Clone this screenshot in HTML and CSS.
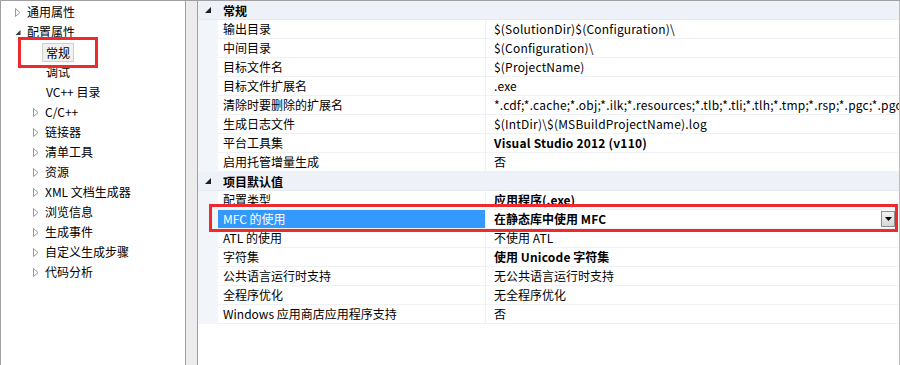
FILE: index.html
```html
<!DOCTYPE html>
<html>
<head>
<meta charset="utf-8">
<link rel="stylesheet" href="styles.css">
</head>
<body>
<div class="win">
  <div class="tree">
    <div class="node l0"><span class="arr"><svg width="6" height="9" viewBox="0 0 6 9"><path d="M0.5 0.5 L5 4.5 L0.5 8.5 Z" fill="none" stroke="#9a9a9a"/></svg></span><span>通用属性</span></div>
    <div class="node l0"><span class="arr"><svg width="6" height="9" viewBox="0 0 6 9"><path d="M5.5 2 L5.5 7 L0.5 7 Z" fill="#3c3c3c"/></svg></span><span>配置属性</span></div>
    <div class="node l1 leaf"><span class="sel">常规</span></div>
    <div class="node l1 leaf"><span>调试</span></div>
    <div class="node l1 leaf"><span>VC++ 目录</span></div>
    <div class="node l1"><span class="arr"><svg width="6" height="9" viewBox="0 0 6 9"><path d="M0.5 0.5 L5 4.5 L0.5 8.5 Z" fill="none" stroke="#9a9a9a"/></svg></span><span>C/C++</span></div>
    <div class="node l1"><span class="arr"><svg width="6" height="9" viewBox="0 0 6 9"><path d="M0.5 0.5 L5 4.5 L0.5 8.5 Z" fill="none" stroke="#9a9a9a"/></svg></span><span>链接器</span></div>
    <div class="node l1"><span class="arr"><svg width="6" height="9" viewBox="0 0 6 9"><path d="M0.5 0.5 L5 4.5 L0.5 8.5 Z" fill="none" stroke="#9a9a9a"/></svg></span><span>清单工具</span></div>
    <div class="node l1"><span class="arr"><svg width="6" height="9" viewBox="0 0 6 9"><path d="M0.5 0.5 L5 4.5 L0.5 8.5 Z" fill="none" stroke="#9a9a9a"/></svg></span><span>资源</span></div>
    <div class="node l1"><span class="arr"><svg width="6" height="9" viewBox="0 0 6 9"><path d="M0.5 0.5 L5 4.5 L0.5 8.5 Z" fill="none" stroke="#9a9a9a"/></svg></span><span>XML 文档生成器</span></div>
    <div class="node l1"><span class="arr"><svg width="6" height="9" viewBox="0 0 6 9"><path d="M0.5 0.5 L5 4.5 L0.5 8.5 Z" fill="none" stroke="#9a9a9a"/></svg></span><span>浏览信息</span></div>
    <div class="node l1"><span class="arr"><svg width="6" height="9" viewBox="0 0 6 9"><path d="M0.5 0.5 L5 4.5 L0.5 8.5 Z" fill="none" stroke="#9a9a9a"/></svg></span><span>生成事件</span></div>
    <div class="node l1"><span class="arr"><svg width="6" height="9" viewBox="0 0 6 9"><path d="M0.5 0.5 L5 4.5 L0.5 8.5 Z" fill="none" stroke="#9a9a9a"/></svg></span><span>自定义生成步骤</span></div>
    <div class="node l1"><span class="arr"><svg width="6" height="9" viewBox="0 0 6 9"><path d="M0.5 0.5 L5 4.5 L0.5 8.5 Z" fill="none" stroke="#9a9a9a"/></svg></span><span>代码分析</span></div>
    <div class="mark mark-tree"></div>
  </div>
  <div class="splitter"></div>
  <div class="grid">
    <div class="cat"><span class="carr"><svg width="6" height="6" viewBox="0 0 6 6"><path d="M6 0 L6 6 L0 6 Z" fill="#1e1e1e"/></svg></span><span>常规</span></div>
    <div class="row"><span class="gut"></span><span class="name">输出目录</span><span class="val lat">$(SolutionDir)$(Configuration)\</span></div>
    <div class="row"><span class="gut"></span><span class="name">中间目录</span><span class="val lat">$(Configuration)\</span></div>
    <div class="row"><span class="gut"></span><span class="name">目标文件名</span><span class="val lat">$(ProjectName)</span></div>
    <div class="row"><span class="gut"></span><span class="name">目标文件扩展名</span><span class="val lat">.exe</span></div>
    <div class="row"><span class="gut"></span><span class="name">清除时要删除的扩展名</span><span class="val lat">*.cdf;*.cache;*.obj;*.ilk;*.resources;*.tlb;*.tli;*.tlh;*.tmp;*.rsp;*.pgc;*.pgd;*.meta;$(TargetPath)</span></div>
    <div class="row"><span class="gut"></span><span class="name">生成日志文件</span><span class="val lat">$(IntDir)\$(MSBuildProjectName).log</span></div>
    <div class="row"><span class="gut"></span><span class="name">平台工具集</span><span class="val b lat">Visual Studio 2012 (v110)</span></div>
    <div class="row"><span class="gut"></span><span class="name">启用托管增量生成</span><span class="val">否</span></div>
    <div class="cat"><span class="carr"><svg width="6" height="6" viewBox="0 0 6 6"><path d="M6 0 L6 6 L0 6 Z" fill="#1e1e1e"/></svg></span><span>项目默认值</span></div>
    <div class="row"><span class="gut"></span><span class="name">配置类型</span><span class="val b">应用程序(.exe)</span></div>
    <div class="row active"><span class="gut"></span><span class="name">MFC 的使用</span><span class="val b">在静态库中使用 <span class="lat">MFC</span><span class="drop"><svg width="7" height="4" viewBox="0 0 7 4"><path d="M0 0 L7 0 L3.5 4 Z" fill="#000"/></svg></span></span></div>
    <div class="row"><span class="gut"></span><span class="name">ATL 的使用</span><span class="val">不使用 <span class="lat">ATL</span></span></div>
    <div class="row"><span class="gut"></span><span class="name">字符集</span><span class="val b">使用 <span class="lat">Unicode</span> 字符集</span></div>
    <div class="row"><span class="gut"></span><span class="name">公共语言运行时支持</span><span class="val">无公共语言运行时支持</span></div>
    <div class="row"><span class="gut"></span><span class="name">全程序优化</span><span class="val">无全程序优化</span></div>
    <div class="row"><span class="gut"></span><span class="name">Windows 应用商店应用程序支持</span><span class="val">否</span></div>
    <div class="mark mark-mfc"></div>
  </div>
</div>
</body>
</html>
```

FILE: styles.css
```css
* { box-sizing: border-box; }
html, body { margin: 0; padding: 0; background: #fff; }
body {
  font-family: "Noto Sans CJK SC", sans-serif;
  font-size: 12px;
  color: #000;
}
.win {
  display: flex;
  width: 900px;
  height: 365px;
  border-top: 1px solid #a0a0a0;
  overflow: hidden;
}
.tree {
  position: relative;
  width: 186px;
  flex: none;
  border-left: 1px solid #a0a0a0;
  border-right: 1px solid #a0a0a0;
  padding-top: 1px;
  background: #fff;
}
.node {
  display: flex;
  align-items: center;
  height: 20px;
  line-height: 20px;
  white-space: nowrap;
}
.node.l0 { padding-left: 14px; }
.node.l1 { padding-left: 32px; }
.node.leaf { padding-left: 45px; }
.arr {
  width: 12px;
  flex: none;
  display: flex;
  align-items: center;
}
.arr svg { display: block; }
.sel {
  margin-left: -4px;
  padding: 0 3px;
  height: 19px;
  line-height: 17px;
  border: 1px solid #cfcfcf;
  background: #f0f0f0;
}
.splitter {
  width: 11px;
  flex: none;
  background: #ececec;
}
.grid {
  position: relative;
  flex: 1;
  border-left: 1px solid #a0a0a0;
  border-right: 1px solid #bdbdbd;
  background: #fff;
}
.cat {
  display: flex;
  align-items: center;
  height: 19px;
  background: #eef2f8;
  font-weight: bold;
  border-bottom: 1px solid #e6ebf2;
}
.carr {
  width: 25px;
  flex: none;
  display: flex;
  padding-left: 7px;
}
.row {
  display: grid;
  grid-template-columns: 20px 268px 1fr;
  height: 19px;
}
.gut { background: #f2f5fa; }
.name {
  padding-left: 5px;
  line-height: 18px;
  border-bottom: 1px solid #eff1f4;
  border-right: 1px solid #eff1f4;
  white-space: nowrap;
  overflow: hidden;
}
.val {
  position: relative;
  padding-left: 8px;
  line-height: 18px;
  border-bottom: 1px solid #eff1f4;
  white-space: nowrap;
  overflow: hidden;
}
.lat { letter-spacing: 0.2px; }
.b { font-weight: bold; }
.row.active .name {
  background: #3399ff;
  color: #fff;
}
.drop {
  position: absolute;
  right: 4px;
  top: 1px;
  width: 14px;
  height: 16px;
  border: 1px solid #8c8c8c;
  background: linear-gradient(#f2f2f2, #d8d8d8);
  display: flex;
  align-items: center;
  justify-content: center;
}
.drop svg { display: block; }
.mark {
  position: absolute;
  border: 3px solid #ee2a2f;
  pointer-events: none;
}
.mark-tree {
  left: 17px;
  top: 36px;
  width: 80px;
  height: 31px;
}
.mark-mfc {
  left: 11px;
  top: 203px;
  width: 689px;
  height: 28px;
}
```
